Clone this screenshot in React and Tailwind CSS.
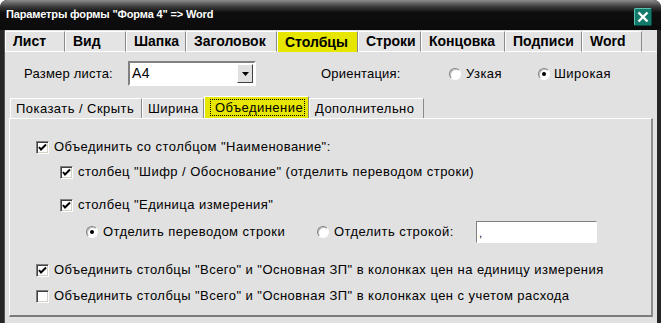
import React from 'react';

const topTabs = [
  { label: 'Лист', w: 'w-[60px]' },
  { label: 'Вид', w: 'w-[61px]' },
  { label: 'Шапка', w: 'w-[60px]' },
  { label: 'Заголовок', w: 'w-[91px]' },
  { label: 'Столбцы', w: 'w-[81px]', active: true },
  { label: 'Строки', w: 'w-[63px]' },
  { label: 'Концовка', w: 'w-[84px]' },
  { label: 'Подписи', w: 'w-[77px]' },
  { label: 'Word', w: 'w-[60px]' },
];

const subTabs = [
  { label: 'Показать / Скрыть', w: 'w-[132px]' },
  { label: 'Ширина', w: 'w-[62px]' },
  { label: 'Объединение', w: 'w-[105px]', active: true },
  { label: 'Дополнительно', w: 'w-[115px]' },
];

function Checkbox({ checked }) {
  return (
    <span className="w-[13px] h-[13px] shrink-0 bg-white border border-t-[#808080] border-l-[#808080] border-b-white border-r-white shadow-[inset_1px_1px_0_#404040,inset_-1px_-1px_0_#d4d0c8] flex items-center justify-center">
      {checked && (
        <svg width="9" height="9" viewBox="0 0 9 9">
          <path d="M1 4 L3 6.5 L8 1.5" fill="none" stroke="#000" strokeWidth="2" />
        </svg>
      )}
    </span>
  );
}

function Radio({ checked }) {
  return (
    <span className="w-[12px] h-[12px] shrink-0 rounded-full bg-white border border-t-[#808080] border-l-[#808080] border-b-white border-r-white shadow-[inset_1px_1px_0_#c0c0c0] flex items-center justify-center">
      {checked && <span className="w-[4px] h-[4px] rounded-full bg-black" />}
    </span>
  );
}

function Check({ checked, children, className = '' }) {
  return (
    <div className={`flex items-center h-[20px] ${className}`}>
      <Checkbox checked={checked} />
      <span className="ml-[5px] whitespace-nowrap">{children}</span>
    </div>
  );
}

export default function App() {
  return (
    <div className="w-[661px] h-[323px] overflow-hidden bg-[#262626] rounded-t-[7px] flex flex-col text-[13px] tracking-[0.45px] text-black font-['Liberation_Sans',Arial,sans-serif]">
      {/* Title bar */}
      <div className="h-[30px] shrink-0 flex items-start justify-between pl-[6px] pr-[9px] bg-[linear-gradient(to_bottom,#8c8c8c_0%,#3c3c3c_22%,#0e0e0e_42%,#0b0b0b_100%)] rounded-t-[7px]">
        <span className="mt-[9px] text-[11px] tracking-[-0.15px] font-bold text-white leading-none whitespace-nowrap">
          Параметры формы "Форма 4" =&gt; Word
        </span>
        <span className="mt-[8px] w-[18px] h-[18px] rounded-[2px] bg-[#127a6a] border border-t-[#5cc0b0] border-l-[#5cc0b0] border-b-[#064a40] border-r-[#064a40] flex items-center justify-center">
          <svg width="12" height="12" viewBox="0 0 12 12">
            <path d="M1.5 1.5 L10.5 10.5 M10.5 1.5 L1.5 10.5" stroke="#fff" strokeWidth="2.4" />
          </svg>
        </span>
      </div>

      <div className="flex-1 mx-[4px] bg-[#e1e1e1] border-l border-[#555] flex flex-col">
        {/* Top tabs */}
        <div className="flex pt-[1px] h-[22px] shrink-0">
          {topTabs.map((t) => (
            <div
              key={t.label}
              className={`${t.w} h-[21px] pl-[7px] flex items-center font-bold text-[14px] tracking-normal whitespace-nowrap border-t border-l border-r border-t-white border-l-white border-r-[#8a8a8a] ${t.active ? 'bg-[#e6e600] border-t-[#e6e600]' : 'bg-[#e4e4e4] border-b border-b-white'}`}
            >
              {t.label}
            </div>
          ))}
          <div className="flex-1 border-b border-b-white" />
        </div>

        {/* Size / orientation */}
        <div className="flex items-center h-[44px] shrink-0 pl-[19px] pb-[1px]">
          <span className="w-[104px] tracking-[0.2px] whitespace-nowrap">Размер листа:</span>
          <div className="w-[128px] h-[25px] flex bg-white border-2 border-t-[#808080] border-l-[#808080] border-b-white border-r-white">
            <span className="flex-1 pl-[2px] flex items-center text-[14px]">A4</span>
            <span className="w-[16px] m-[1px] bg-[#e0e0e0] border border-t-white border-l-white border-b-[#404040] border-r-[#404040] flex items-center justify-center">
              <svg width="7" height="4" viewBox="0 0 7 4">
                <path d="M0 0 H7 L3.5 4 Z" fill="#000" />
              </svg>
            </span>
          </div>
          <span className="ml-[65px] w-[128px] tracking-[0.2px] whitespace-nowrap">Ориентация:</span>
          <div className="w-[89px] flex items-center">
            <Radio />
            <span className="ml-[5px]">Узкая</span>
          </div>
          <div className="flex items-center">
            <Radio checked />
            <span className="ml-[4px]">Широкая</span>
          </div>
        </div>

        {/* Sub tabs */}
        <div className="flex items-end h-[22px] shrink-0 pl-[5px]">
          {subTabs.map((t) => (
            <div
              key={t.label}
              className={`${t.w} pl-[5px] flex items-center whitespace-nowrap border-t border-l border-r border-t-white border-l-white border-r-[#8a8a8a] ${t.active ? 'h-[22px] bg-[#e6e600] px-[3px]' : 'h-[20px] bg-[#e4e4e4]'}`}
            >
              {t.active ? (
                <span className="w-full h-[17px] pl-[4px] flex items-center border border-dotted border-black">
                  {t.label}
                </span>
              ) : (
                t.label
              )}
            </div>
          ))}
        </div>

        {/* Panel */}
        <div className="mx-[4px] h-[199px] shrink-0 border-t border-l border-t-white border-l-white border-r-2 border-b-2 border-r-[#8c8c8c] border-b-[#7a7a7a] pl-[26px] pt-[18px] flex flex-col">
          <Check checked>Объединить со столбцом "Наименование":</Check>
          <Check checked className="mt-[5px] ml-[24px]">
            столбец "Шифр / Обоснование" (отделить переводом строки)
          </Check>
          <Check checked className="mt-[13px] ml-[24px]">
            столбец "Единица измерения"
          </Check>
          <div className="mt-[6px] ml-[50px] h-[22px] flex items-center">
            <Radio checked />
            <span className="ml-[5px] w-[214px] whitespace-nowrap">Отделить переводом строки</span>
            <Radio />
            <span className="ml-[5px] w-[142px] whitespace-nowrap">Отделить строкой:</span>
            <div className="w-[121px] h-[22px] bg-white border border-t-[#808080] border-l-[#808080] border-b-white border-r-white pl-[2px] flex items-end pb-[3px] text-[11px] leading-none">
              ,
            </div>
          </div>
          <Check checked className="mt-[17px]">
            Объединить столбцы "Всего" и "Основная ЗП" в колонках цен на единицу измерения
          </Check>
          <Check className="mt-[6px]">
            Объединить столбцы "Всего" и "Основная ЗП" в колонках цен с учетом расхода
          </Check>
        </div>
      </div>
    </div>
  );
}
